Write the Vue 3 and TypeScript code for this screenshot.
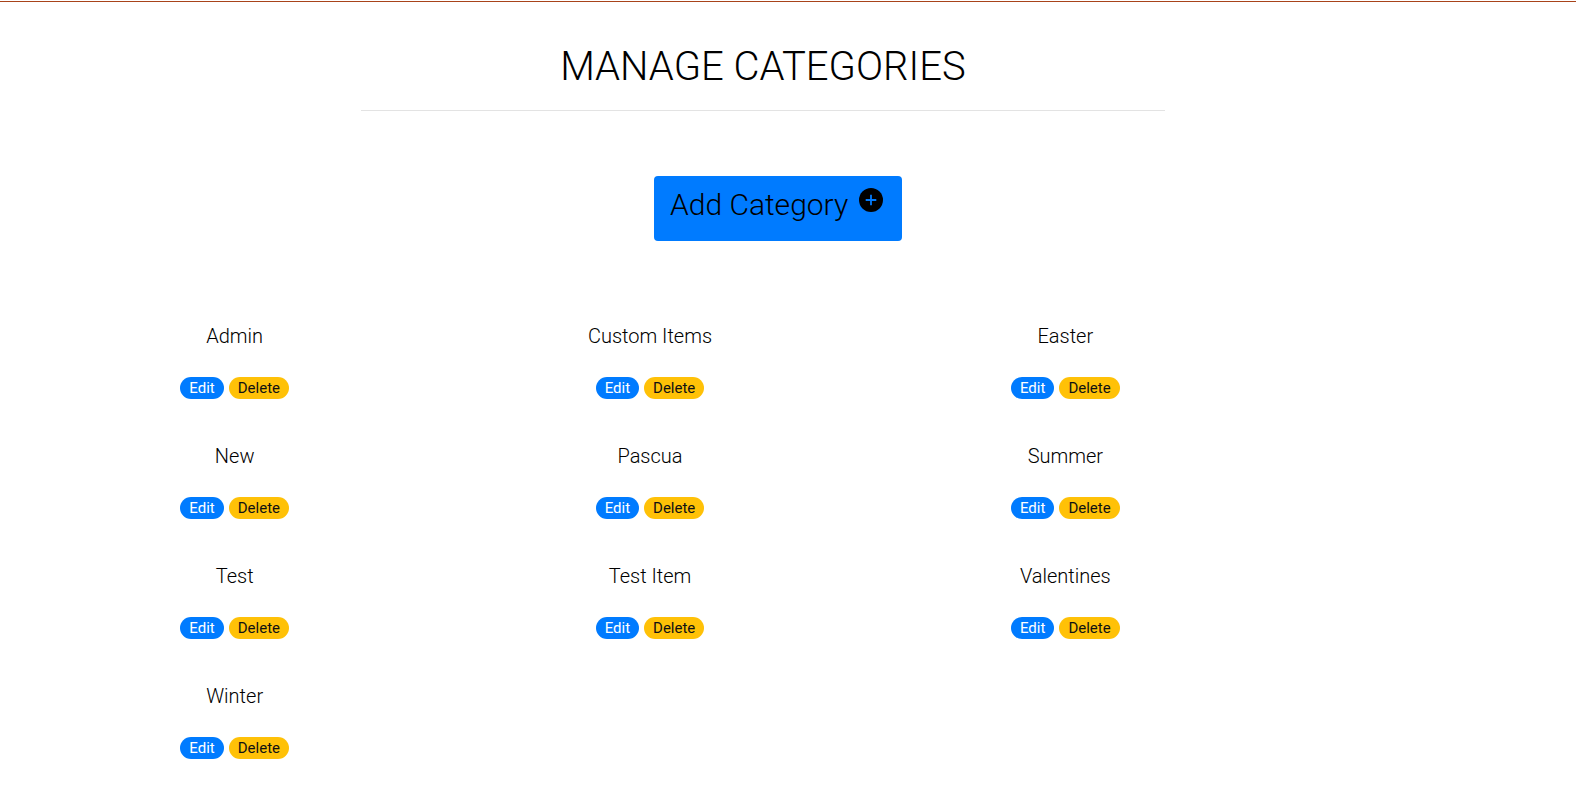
<script setup lang="ts">
const categories: string[] = [
  'Admin', 'Custom Items', 'Easter', 'New', 'Pascua',
  'Summer', 'Test', 'Test Item', 'Valentines', 'Winter',
]
</script>

<template>
  <main class="page">
    <h1 class="title">MANAGE CATEGORIES</h1>
    <button class="add" type="button">
      Add Category
      <svg class="plus" viewBox="0 0 24 24" aria-hidden="true">
        <circle cx="12" cy="12" r="12" />
        <path d="M12 6.7v10.6M6.7 12h10.6" stroke="#007bff" stroke-width="1.8" />
      </svg>
    </button>
    <section class="grid">
      <article v-for="name in categories" :key="name" class="category">
        <h2 class="name">{{ name }}</h2>
        <div class="actions">
          <a class="pill edit" href="#">Edit</a>
          <a class="pill delete" href="#">Delete</a>
        </div>
      </article>
    </section>
  </main>
</template>

<style>
body {
  margin: 0;
  background: #fff;
}
</style>

<style scoped>
.page {
  margin-top: 1px;
  border-top: 1px solid #a8431a;
  font-family: Roboto, sans-serif;
  font-weight: 300;
  color: #000;
  display: flex;
  flex-direction: column;
}
.title {
  width: 51%;
  box-sizing: border-box;
  align-self: flex-start;
  margin: 41px 0 0 361px;
  padding-bottom: 19px;
  border-bottom: 1px solid #e3e3e3;
  font-size: 40px;
  line-height: 48px;
  font-weight: 300;
  text-align: center;
}
.add {
  display: flex;
  align-items: flex-start;
  gap: 11px;
  height: 65px;
  margin: 65px 0 0 654px;
  align-self: flex-start;
  padding: 6px 19px 0 16px;
  border: 0;
  border-radius: 4px;
  background: #007bff;
  color: #000;
  font: 300 30px/45px Roboto, sans-serif;
}
.plus {
  width: 24px;
  height: 24px;
  margin-top: 6px;
}
.grid {
  width: calc(100% - 330px);
  margin: 71px 0 0 27px;
  display: grid;
  grid-template-columns: repeat(3, 1fr);
}
.category {
  height: 120px;
  text-align: center;
}
.name {
  margin: 12px 0 29px;
  font-size: 20px;
  line-height: 24px;
  font-weight: 300;
}
.actions {
  display: flex;
  justify-content: center;
  gap: 5px;
}
.pill {
  padding: 0 9px;
  border-radius: 11px;
  font-size: 15px;
  line-height: 22px;
  font-weight: 400;
  text-decoration: none;
}
.edit {
  background: #007bff;
  color: #fff;
}
.delete {
  background: #ffc107;
  color: #111;
}
</style>
